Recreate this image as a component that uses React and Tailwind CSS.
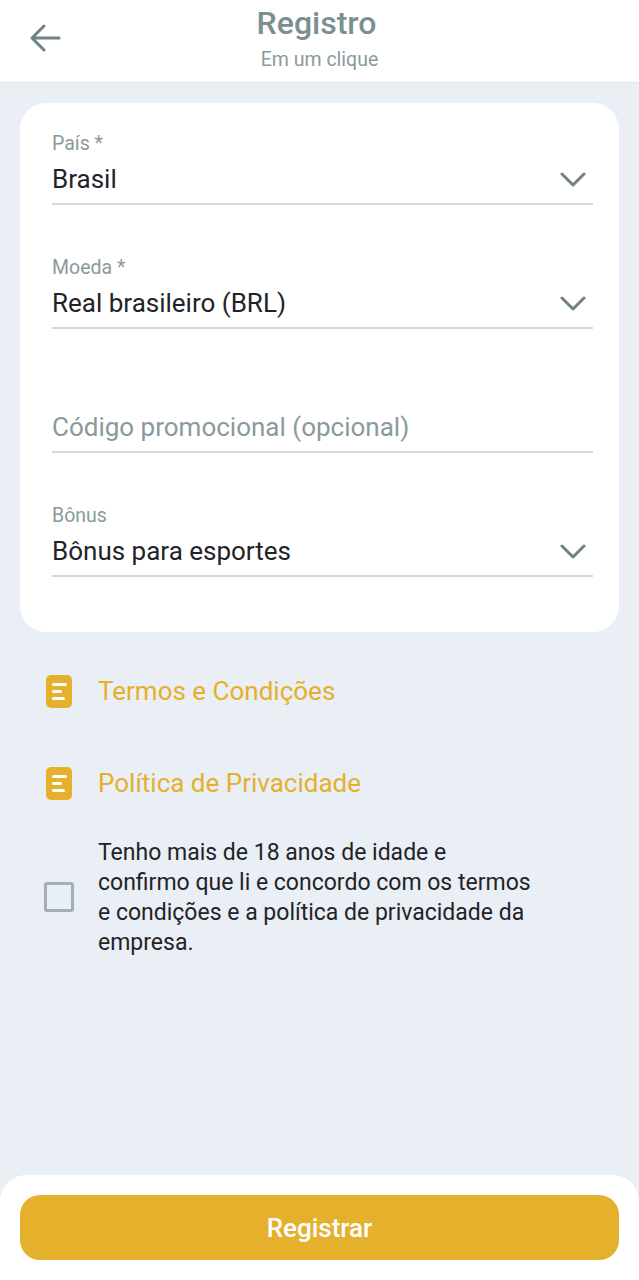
import React from 'react';

const DocIcon = () => (
    <svg width="26" height="33" viewBox="0 0 26 33" className="shrink-0">
        <rect x="0" y="0" width="26" height="33" rx="5" fill="#e5b02c" />
        <rect x="6" y="8" width="15" height="3" rx="1.5" fill="#ffffff" />
        <rect x="6" y="15" width="10" height="3" rx="1.5" fill="#ffffff" />
        <rect x="6" y="22" width="13" height="3" rx="1.5" fill="#ffffff" />
    </svg>
);

const Chevron = () => (
    <svg width="26" height="16" viewBox="0 0 26 16" fill="none" className="shrink-0 mr-[7px]">
        <path d="M2 2 L13 13 L24 2" stroke="#6f8285" strokeWidth="3" strokeLinecap="round" strokeLinejoin="round" />
    </svg>
);

const BackArrow = () => (
    <svg width="32" height="28" viewBox="0 0 32 28" fill="none" className="absolute left-[29px] top-[24px]">
        <path d="M30 14 H3 M15 2 L3 14 L15 26" stroke="#6f8285" strokeWidth="3" strokeLinecap="round" strokeLinejoin="round" />
    </svg>
);

function Field({ label, value, placeholder, chevron = true }) {
    return (
        <div className="h-[124px] flex flex-col justify-end">
            {label && <div className="text-[19.5px] leading-[22px] mb-[10px] text-[#8a9a9c]">{label}</div>}
            <div className="flex items-center justify-between h-[40px] pb-[9px] border-b-2 border-[#d5dadd]">
                <span className={`text-[26px] leading-[30px] mb-[2px] ${placeholder ? 'text-[#8a9a9c]' : 'text-[#1f2428]'}`}>
                    {value || placeholder}
                </span>
                {chevron && <Chevron />}
            </div>
        </div>
    );
}

export default function App() {
    return (
        <div className="w-[639px] h-[1280px] bg-[#eaeef5] flex flex-col font-['Roboto',sans-serif] overflow-hidden">
            {/* Header */}
            <div className="h-[83px] shrink-0 bg-white border-b border-[#e1e4e9] flex items-start relative">
                <BackArrow />
                <div className="flex-1 flex flex-col items-center">
                    <div className="text-[32px] leading-[38px] font-medium text-[#7b8f92] mt-[4px] -ml-[6px]">Registro</div>
                    <div className="text-[19.5px] leading-[24px] text-[#8a9a9c] mt-[6px]">Em um clique</div>
                </div>
            </div>

            {/* Form card */}
            <div className="mx-[20px] mt-[20px] h-[529px] bg-white rounded-[26px] pl-[32px] pr-[26px] shrink-0">
                <div className="-mt-[24px] pt-[2px]">
                    <Field label="País *" value="Brasil" />
                    <Field label="Moeda *" value="Real brasileiro (BRL)" />
                    <Field placeholder="Código promocional (opcional)" chevron={false} />
                    <Field label="Bônus" value="Bônus para esportes" />
                </div>
            </div>

            {/* Links */}
            <div className="flex items-center gap-[26px] pl-[46px] mt-[43px] h-[33px]">
                <DocIcon />
                <span className="text-[26px] text-[#e5b02c]">Termos e Condições</span>
            </div>
            <div className="flex items-center gap-[26px] pl-[46px] mt-[59px] h-[33px]">
                <DocIcon />
                <span className="text-[26px] text-[#e5b02c]">Política de Privacidade</span>
            </div>

            {/* Terms checkbox */}
            <div className="flex items-center pl-[44px] mt-[38px]">
                <div className="w-[30px] h-[30px] mb-[3px] border-[3px] border-[#a3afb4] rounded-[3px] shrink-0" />
                <p className="ml-[24px] w-[440px] text-[23px] leading-[30px] text-[#1f2428]">
                    Tenho mais de 18 anos de idade e confirmo que li e concordo com os termos e condições e a política de privacidade da empresa.
                </p>
            </div>

            {/* Footer */}
            <div className="mt-auto h-[105px] bg-white rounded-t-[26px] px-[20px] pt-[20px]">
                <button className="w-full h-[65px] pt-[2px] bg-[#e5b02c] rounded-[20px] text-white text-[26px] font-medium">
                    Registrar
                </button>
            </div>
        </div>
    );
}
